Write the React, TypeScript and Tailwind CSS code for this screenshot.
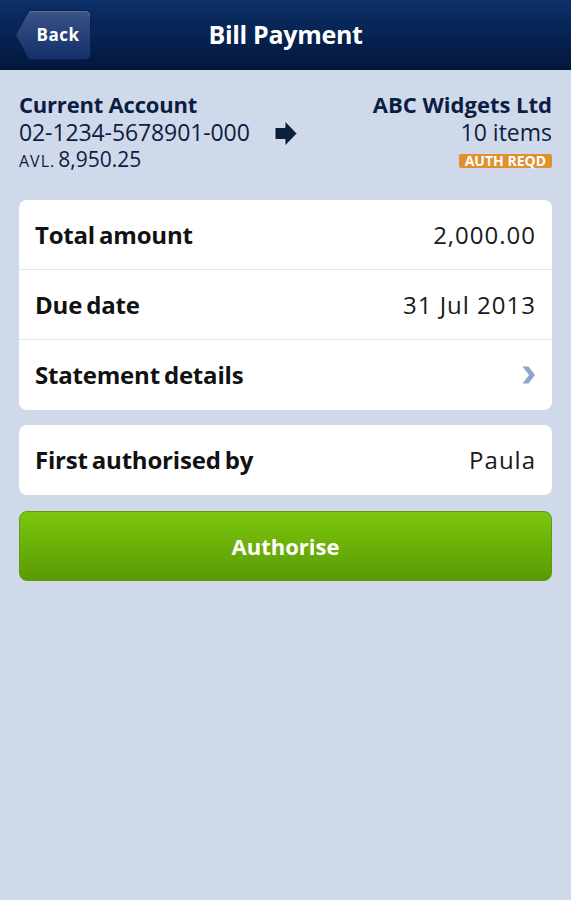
const font = { fontFamily: '"Open Sans", "Noto Sans", sans-serif' };

function Row({ label, children, last }: { label: string; children: React.ReactNode; last?: boolean }) {
  return (
    <div className={`flex h-[70px] items-center justify-between px-4 ${last ? "" : "border-b border-[#e3e6ea]"}`}>
      <span className="text-[24px] font-bold tracking-[-0.2px] text-[#111] [word-spacing:-2px]">{label}</span>
      {children}
    </div>
  );
}

function Value({ children }: { children: React.ReactNode }) {
  return <span className="text-[24px] tracking-[1px] text-[#1a1a1a]">{children}</span>;
}

function BackButton() {
  return (
    <div className="relative h-[52px] w-[78px]">
      <svg className="absolute inset-0" width="78" height="52" viewBox="0 0 78 52">
        <defs>
          <linearGradient id="bb" x1="0" y1="0" x2="0" y2="1">
            <stop offset="0%" stopColor="#3a5388" />
            <stop offset="100%" stopColor="#14306a" />
          </linearGradient>
        </defs>
        <path d="M15 1.5 H71 Q76.5 1.5 76.5 7 V45 Q76.5 50.5 71 50.5 H15 L1.5 26 Z" fill="url(#bb)" stroke="#0a1f4a" strokeWidth="1" />
        <path d="M15.5 2.5 H71 Q75.5 2.5 75.5 7" fill="none" stroke="#5a6f9c" strokeWidth="1" />
      </svg>
      <span className="absolute inset-0 flex items-center justify-center pl-[10px] text-[17px] font-bold tracking-[0.5px] text-white">Back</span>
    </div>
  );
}

export default function App() {
  return (
    <div className="min-h-[900px] w-full bg-[#cfd9e9]" style={font}>
      <header className="relative flex h-[70px] items-center border-b border-[#031433] bg-gradient-to-b from-[#0c3068] to-[#03173d] px-[14px]">
        <BackButton />
        <h1 className="absolute left-0 right-0 top-0 flex h-[69px] items-center justify-center text-[25px] font-bold tracking-[-0.3px] text-white">
          Bill Payment
        </h1>
      </header>

      <div className="grid h-[130px] grid-cols-[1fr_auto_1fr] items-start px-[19px] pt-[20px] text-[#0b1d42]">
        <div className="flex flex-col">
          <span className="whitespace-nowrap text-[22px] font-bold leading-[28px] tracking-[-0.2px]">Current Account</span>
          <span className="whitespace-nowrap text-[23px] leading-[29px] tracking-[-0.1px]">02-1234-5678901-000</span>
          <span className="flex h-[25px] items-baseline leading-[25px]">
            <span className="text-[16px] tracking-[1px]">AVL.</span>
            <span className="ml-[3px] text-[21px]">8,950.25</span>
          </span>
        </div>
        <svg className="mt-[30px]" width="24" height="27" viewBox="0 0 24 27">
          <path d="M1 7.5 H11 V1 L23 13.5 L11 26 V19.5 H1 Z" fill="#0d1f3f" stroke="#eef2f8" strokeWidth="0.8" />
        </svg>
        <div className="flex flex-col items-end">
          <span className="whitespace-nowrap text-[22px] font-bold leading-[28px]">ABC Widgets Ltd</span>
          <span className="text-[23px] leading-[29px]">10 items</span>
          <span className="flex h-[25px] items-center pt-[2px]">
            <span className="rounded-[2px] bg-[#e0912f] px-[6px] text-[14px] font-bold leading-[14px] text-white">AUTH REQD</span>
          </span>
        </div>
      </div>

      <div className="flex flex-col px-[19px]">
        <div className="overflow-hidden rounded-[8px] bg-white">
          <Row label="Total amount">
            <Value>2,000.00</Value>
          </Row>
          <Row label="Due date">
            <Value>31 Jul 2013</Value>
          </Row>
          <Row label="Statement details" last>
            <svg width="14" height="18" viewBox="0 0 14 18">
              <path d="M0.5 0.5 H6.5 L13 9 L6.5 17.5 H0.5 L7 9 Z" fill="#8ea5c9" />
            </svg>
          </Row>
        </div>

        <div className="mt-[15px] overflow-hidden rounded-[8px] bg-white">
          <Row label="First authorised by" last>
            <Value>Paula</Value>
          </Row>
        </div>

        <button className="mt-[16px] flex h-[70px] items-center justify-center rounded-[8px] border border-[#5e9a10] bg-gradient-to-b from-[#7cc70c] to-[#5a9a05] text-[22px] font-bold text-white">
          Authorise
        </button>
      </div>
    </div>
  );
}
